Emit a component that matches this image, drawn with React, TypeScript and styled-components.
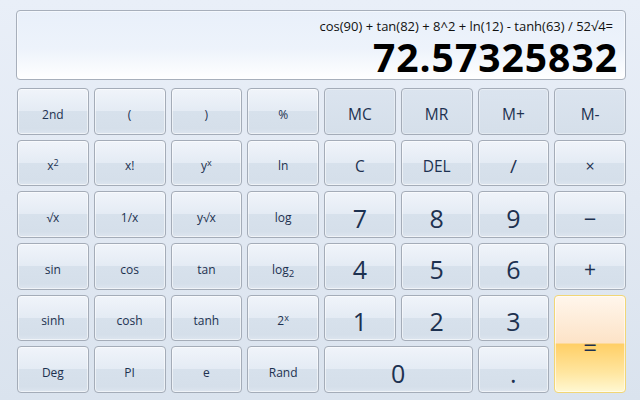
import React from "react";
import styled, { createGlobalStyle, css } from "styled-components";

const GlobalStyle = createGlobalStyle`
  html, body {
    margin: 0;
    padding: 0;
  }
  body {
    font-family: "Open Sans", "Noto Sans", "DejaVu Sans", sans-serif;
    background: #e3eaf4;
  }
`;

const Window = styled.div`
  width: 640px;
  height: 400px;
  box-sizing: border-box;
  padding: 10px 14px 0 16px;
  background: linear-gradient(to bottom, #e9eff8 0%, #e2e9f3 50%, #dae3ee 100%);
  display: flex;
  flex-direction: column;
  gap: 8px;
  overflow: hidden;
`;

const Display = styled.div`
  height: 70px;
  box-sizing: border-box;
  border: 1px solid #a7afbb;
  border-radius: 4px;
  background: linear-gradient(to bottom, #e9f0fa 0%, #edf3fb 55%, #ffffff 100%);
  box-shadow: inset 0 0 0 1px rgba(255, 255, 255, 0.5);
  display: flex;
  flex-direction: column;
  align-items: flex-end;
  padding: 7px 7px 0 12px;
`;

const Expression = styled.div`
  font-size: 13px;
  line-height: 17px;
  color: #111;
  padding-right: 5px;
  white-space: nowrap;
`;

const Result = styled.div`
  font-size: 39px;
  font-weight: 700;
  line-height: 36px;
  margin-top: 4px;
  color: #000;
  letter-spacing: 1px;
  white-space: nowrap;
`;

const Keypad = styled.div`
  height: 305px;
  display: grid;
  grid-template-columns: repeat(8, 1fr);
  grid-template-rows: repeat(6, 1fr);
  column-gap: 5px;
  row-gap: 5px;
  padding-left: 1px;
`;

type Variant = "fn" | "mem" | "eq";

const Key = styled.button<{
  $variant?: Variant;
  $size?: number;
  $col?: number;
  $row?: number;
}>`
  font-family: "Open Sans", "Noto Sans", "DejaVu Sans", sans-serif;
  font-size: ${(p) => p.$size ?? 12}px;
  color: #1d3150;
  border-radius: 4px;
  padding: 7px 0 0 0;
  margin: 0;
  display: flex;
  align-items: center;
  justify-content: center;
  line-height: 1;
  ${(p) => (p.$col ? `grid-column: span ${p.$col};` : "")}
  ${(p) => (p.$row ? `grid-row: span ${p.$row};` : "")}
  ${(p) =>
    p.$variant === "mem"
      ? css`
          border: 1px solid #a4acb8;
          background: linear-gradient(to bottom, #dbe4ef 0%, #d5dfea 100%);
          box-shadow: inset 0 0 0 1px rgba(255, 255, 255, 0.35);
        `
      : p.$variant === "eq"
      ? css`
          border: 1px solid #f1d676;
          background: linear-gradient(
            to bottom,
            #fff6ec 0%,
            #fde3c7 49%,
            #ffcf66 50%,
            #ffe6a0 80%,
            #fff8d2 100%
          );
          box-shadow: inset 0 0 0 1px rgba(255, 255, 255, 0.6);
        `
      : css`
          border: 1px solid #a4acb8;
          background: linear-gradient(
            to bottom,
            #f0f4fa 0%,
            #e4ebf4 49%,
            #d7e1ec 50%,
            #d5dfea 88%,
            #dde5ef 100%
          );
          box-shadow: inset 0 0 0 1px rgba(255, 255, 255, 0.55);
        `}
`;

/* inline wrapper so sup/sub keep their baseline shifts inside the flex key */
const Label = styled.span`
  display: inline-block;
  white-space: nowrap;
`;

const Sup = styled.sup`
  font-size: 0.75em;
  vertical-align: 0.5em;
  line-height: 0;
`;

const Sub = styled.sub`
  font-size: 0.8em;
  vertical-align: -0.35em;
  line-height: 0;
`;

export default function App() {
  return (
    <>
      <GlobalStyle />
      <Window>
        <Display>
          <Expression>
            cos(90) + tan(82) + 8^2 + ln(12) - tanh(63) / 52√4=
          </Expression>
          <Result>72.57325832</Result>
        </Display>
        <Keypad>
          <Key>2nd</Key>
          <Key>(</Key>
          <Key>)</Key>
          <Key>%</Key>
          <Key $variant="mem" $size={15.5}>MC</Key>
          <Key $variant="mem" $size={15.5}>MR</Key>
          <Key $variant="mem" $size={15.5}>M+</Key>
          <Key $variant="mem" $size={15.5}>M-</Key>

          <Key>
            <Label>
              x<Sup>2</Sup>
            </Label>
          </Key>
          <Key>x!</Key>
          <Key>
            <Label>
              y<Sup>x</Sup>
            </Label>
          </Key>
          <Key>ln</Key>
          <Key $size={15.5}>C</Key>
          <Key $size={15.5}>DEL</Key>
          <Key $size={19}>/</Key>
          <Key $size={16}>×</Key>

          <Key>√x</Key>
          <Key>1/x</Key>
          <Key>y√x</Key>
          <Key>log</Key>
          <Key $size={25}>7</Key>
          <Key $size={25}>8</Key>
          <Key $size={25}>9</Key>
          <Key $size={22}>−</Key>

          <Key>sin</Key>
          <Key>cos</Key>
          <Key>tan</Key>
          <Key>
            <Label>
              log<Sub>2</Sub>
            </Label>
          </Key>
          <Key $size={25}>4</Key>
          <Key $size={25}>5</Key>
          <Key $size={25}>6</Key>
          <Key $size={21}>+</Key>

          <Key>sinh</Key>
          <Key>cosh</Key>
          <Key>tanh</Key>
          <Key>
            <Label>
              2<Sup>x</Sup>
            </Label>
          </Key>
          <Key $size={25}>1</Key>
          <Key $size={25}>2</Key>
          <Key $size={25}>3</Key>
          <Key $variant="eq" $row={2} $size={24}>=</Key>

          <Key>Deg</Key>
          <Key>PI</Key>
          <Key>e</Key>
          <Key>Rand</Key>
          <Key $size={25} $col={2}>0</Key>
          <Key $size={25}>.</Key>
        </Keypad>
      </Window>
    </>
  );
}
